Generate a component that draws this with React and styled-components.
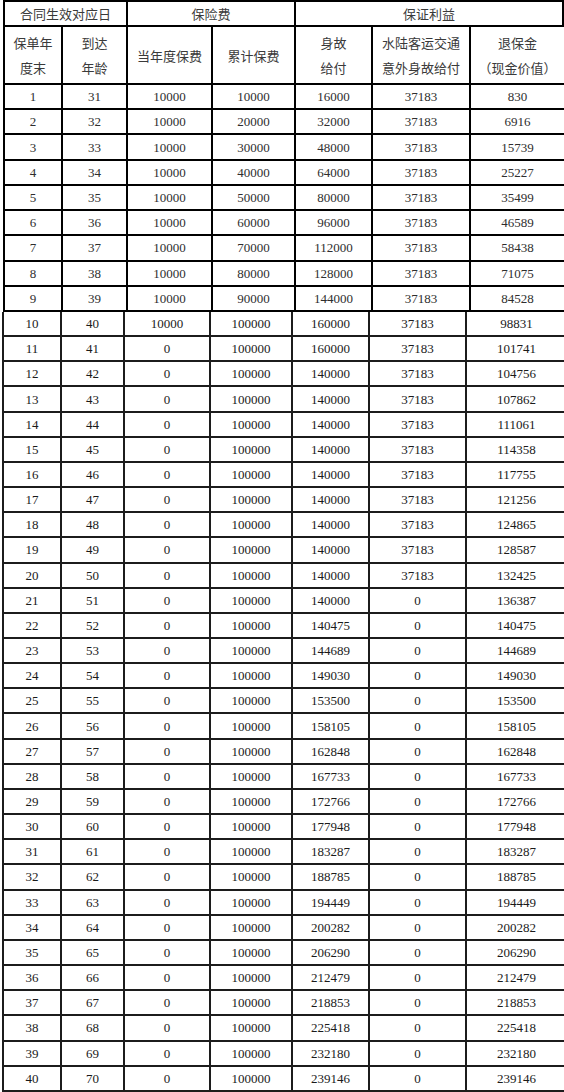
import React from "react";
import styled, { createGlobalStyle } from "styled-components";

const GlobalStyle = createGlobalStyle`
  html, body {
    margin: 0;
    padding: 0;
    background: #ffffff;
    overflow: hidden;
  }
  body {
    width: 564px;
    font-family: "Liberation Serif", "Noto Sans CJK SC", serif;
  }
`;

const Page = styled.div`
  width: 564px;
  height: 1092px;
  overflow: hidden;
  background: #fff;
`;

// upper part of the sheet (header + years 1-9)
const TopGrid = styled.div`
  display: grid;
  grid-template-columns: 58px 65px 85px 83px 77px 98px 93px;
  grid-template-rows: 25px 58px repeat(9, 25.22px);
  margin-left: 3px;
  border-left: 2px solid #000;
  border-top: 2px solid #000;
`;

// lower part, scanned a little differently (years 10-40)
const BottomGrid = styled.div`
  display: grid;
  grid-template-columns: 58px 63px 86px 82px 77px 97px 99px;
  grid-auto-rows: 25.16px;
  margin-left: 2px;
  border-left: 2px solid #1c1c1c;
`;

const Cell = styled.div`
  box-sizing: border-box;
  display: flex;
  align-items: center;
  justify-content: center;
  text-align: center;
  padding-top: 1px;
  border-bottom: 2px solid ${(p) => (p.$soft ? "#1c1c1c" : "#000")};
  border-right: ${(p) =>
    p.$last ? "none" : `2px solid ${p.$soft ? "#1c1c1c" : "#000"}`};
  font-family: "Liberation Serif", "Times New Roman", serif;
  font-size: 13px;
  color: ${(p) => (p.$soft ? "#1a1a1a" : "#2e2e2e")};
  grid-column: ${(p) => (p.$span ? `span ${p.$span}` : "auto")};
  overflow: hidden;
  white-space: nowrap;
`;

const HeadCell = styled(Cell)`
  padding-top: 0;
  font-family: "Noto Sans CJK SC", sans-serif;
  font-size: 13px;
  color: #3a3a3a;
  line-height: 25px;
  flex-direction: column;
`;

const rows = [
  [1, 31, 10000, 10000, 16000, 37183, 830],
  [2, 32, 10000, 20000, 32000, 37183, 6916],
  [3, 33, 10000, 30000, 48000, 37183, 15739],
  [4, 34, 10000, 40000, 64000, 37183, 25227],
  [5, 35, 10000, 50000, 80000, 37183, 35499],
  [6, 36, 10000, 60000, 96000, 37183, 46589],
  [7, 37, 10000, 70000, 112000, 37183, 58438],
  [8, 38, 10000, 80000, 128000, 37183, 71075],
  [9, 39, 10000, 90000, 144000, 37183, 84528],
  [10, 40, 10000, 100000, 160000, 37183, 98831],
  [11, 41, 0, 100000, 160000, 37183, 101741],
  [12, 42, 0, 100000, 140000, 37183, 104756],
  [13, 43, 0, 100000, 140000, 37183, 107862],
  [14, 44, 0, 100000, 140000, 37183, 111061],
  [15, 45, 0, 100000, 140000, 37183, 114358],
  [16, 46, 0, 100000, 140000, 37183, 117755],
  [17, 47, 0, 100000, 140000, 37183, 121256],
  [18, 48, 0, 100000, 140000, 37183, 124865],
  [19, 49, 0, 100000, 140000, 37183, 128587],
  [20, 50, 0, 100000, 140000, 37183, 132425],
  [21, 51, 0, 100000, 140000, 0, 136387],
];

// from year 22 the death benefit equals the cash value
const later = [
  140475, 144689, 149030, 153500, 158105, 162848, 167733, 172766, 177948,
  183287, 188785, 194449, 200282, 206290, 212479, 218853, 225418, 232180,
  239146,
];
later.forEach((v, i) => {
  rows.push([22 + i, 52 + i, 0, 100000, v, 0, v]);
});

const topRows = rows.slice(0, 9);
const bottomRows = rows.slice(9);

const heads = [
  ["保单年", "度末"],
  ["到达", "年龄"],
  ["当年度保费"],
  ["累计保费"],
  ["身故", "给付"],
  ["水陆客运交通", "意外身故给付"],
  ["退保金", "（现金价值）"],
];

export default function App() {
  return (
    <Page>
      <GlobalStyle />
      <TopGrid>
        <HeadCell $span={2}>合同生效对应日</HeadCell>
        <HeadCell $span={2}>保险费</HeadCell>
        <HeadCell $span={3}>保证利益</HeadCell>

        {heads.map((h, i) => (
          <HeadCell key={"h" + i} $last={i === 6}>
            {h.map((line) => (
              <span key={line}>{line}</span>
            ))}
          </HeadCell>
        ))}

        {topRows.map((r) =>
          r.map((v, i) => (
            <Cell key={r[0] + "-" + i} $last={i === 6}>
              {v}
            </Cell>
          ))
        )}
      </TopGrid>

      <BottomGrid>
        {bottomRows.map((r) =>
          r.map((v, i) => (
            <Cell key={r[0] + "-" + i} $soft $last={i === 6}>
              {v}
            </Cell>
          ))
        )}
      </BottomGrid>
    </Page>
  );
}
